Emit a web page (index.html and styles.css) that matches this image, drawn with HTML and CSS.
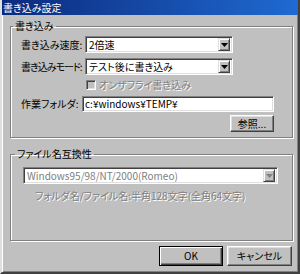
FILE: index.html
```html
<!DOCTYPE html>
<html lang="ja">
<head>
    <meta charset="UTF-8">
    <title>書き込み設定</title>
    <link rel="stylesheet" href="styles.css">
</head>
<body>
    <div class="window">
        <div class="titlebar">書き込み設定</div>
        <div class="content">
            <fieldset class="group group-write">
                <legend>書き込み</legend>
                <div class="row">
                    <span class="label">書き込み速度:</span>
                    <div class="combo">
                        <span class="combo-value">2倍速</span>
                        <span class="combo-btn"><svg width="7" height="4" viewBox="0 0 7 4"><path d="M0 0h7L3.5 4z" fill="#000"/></svg></span>
                    </div>
                </div>
                <div class="row row-mode">
                    <span class="label label-tight">書き込みモード:</span>
                    <div class="combo">
                        <span class="combo-value">テスト後に書き込み</span>
                        <span class="combo-btn"><svg width="7" height="4" viewBox="0 0 7 4"><path d="M0 0h7L3.5 4z" fill="#000"/></svg></span>
                    </div>
                </div>
                <div class="row row-check">
                    <span class="checkbox"></span>
                    <span class="disabled">オンザフライ書き込み</span>
                </div>
                <div class="row row-folder">
                    <span class="label label-folder">作業フォルダ:</span>
                    <div class="textbox">c:¥windows¥TEMP¥</div>
                </div>
                <div class="row row-browse">
                    <button class="btn btn-browse">参照...</button>
                </div>
            </fieldset>

            <fieldset class="group group-compat">
                <legend>ファイル名互換性</legend>
                <div class="combo combo-disabled">
                    <span class="combo-value">Windows95/98/NT/2000(Romeo)</span>
                    <span class="combo-btn"><svg width="7" height="4" viewBox="0 0 7 4"><path d="M0 0h7L3.5 4z" fill="#808080"/></svg></span>
                </div>
                <p class="note disabled">フォルダ名/ファイル名:半角128文字(全角64文字)</p>
            </fieldset>

            <div class="buttons">
                <button class="btn btn-default">OK</button>
                <button class="btn btn-cancel">キャンセル</button>
            </div>
        </div>
    </div>
</body>
</html>
```

FILE: styles.css
```css
body {
    margin: 0;
    background-color: #c0c0c0;
    font-family: "Noto Sans CJK JP", "Liberation Sans", sans-serif;
    font-size: 10px;
    line-height: 12px;
    font-feature-settings: "palt";
    color: #000;
}

.window {
    width: 300px;
    height: 274px;
    box-sizing: border-box;
    border-style: solid;
    border-width: 0 2px 2px 2px;
    border-color: #c0c0c0 #404040 #404040 #dfdfdf;
    box-shadow: inset 1px 0 #fff, inset -1px -1px #808080;
    background-color: #c0c0c0;
}

.titlebar {
    height: 15px;
    line-height: 15px;
    padding-left: 1px;
    background: linear-gradient(90deg, #0c2a7c, #1f6ad2);
    color: #fff;
    font-size: 10px;
}

.content {
    padding: 5px 6px 0 8px;
}

.group {
    margin: 0;
    min-width: 0;
    border: 1px solid #808080;
    box-shadow: inset 1px 1px #fff, 1px 1px #fff;
}

.group legend {
    padding: 0 2px;
    margin-left: -8px;
    line-height: 12px;
}

.group-write {
    width: 283px;
    box-sizing: border-box;
    padding: 4px 18px 5px 10px;
}

.group-compat {
    width: 283px;
    box-sizing: border-box;
    margin-top: 10px;
    padding: 7px 14px 38px 12px;
}

.row {
    display: flex;
    align-items: center;
}

.row-mode {
    margin-top: 5px;
}

.row-check {
    margin-top: 4px;
    padding-left: 65px;
    height: 12px;
}

.row-folder {
    margin-top: 5px;
}

.row-browse {
    margin-top: 3px;
    justify-content: flex-end;
}

.label {
    width: 64px;
    flex: none;
    white-space: nowrap;
}

.label-tight {
    letter-spacing: -1px;
}

.label-folder {
    width: 61px;
}

.combo {
    width: 148px;
    height: 17px;
    box-sizing: border-box;
    display: flex;
    align-items: center;
    justify-content: space-between;
    background-color: #fff;
    border: 1px solid;
    border-color: #808080 #fff #fff #808080;
    box-shadow: inset 1px 1px #404040, inset -1px -1px #dfdfdf;
    padding: 0 2px 0 3px;
}

.combo-value {
    white-space: nowrap;
}

.combo-btn {
    width: 12px;
    height: 13px;
    box-sizing: border-box;
    display: flex;
    align-items: center;
    justify-content: center;
    background-color: #c0c0c0;
    border: 1px solid;
    border-color: #dfdfdf #404040 #404040 #dfdfdf;
    box-shadow: inset 1px 1px #fff, inset -1px -1px #808080;
}

.combo-disabled {
    width: 255px;
}

.combo-disabled .combo-value {
    color: #808080;
}

.checkbox {
    width: 10px;
    height: 10px;
    box-sizing: border-box;
    margin-right: 3px;
    background-color: #c0c0c0;
    border: 1px solid;
    border-color: #808080 #fff #fff #808080;
    box-shadow: inset 1px 1px #404040, inset -1px -1px #dfdfdf;
}

.disabled {
    color: #808080;
    text-shadow: 1px 1px 0 #fff;
}

.textbox {
    width: 192px;
    height: 16px;
    box-sizing: border-box;
    background-color: #fff;
    border: 1px solid;
    border-color: #808080 #fff #fff #808080;
    box-shadow: inset 1px 1px #404040, inset -1px -1px #dfdfdf;
    padding: 1px 2px;
    line-height: 12px;
    white-space: nowrap;
}

.note {
    margin: 6px 0 0 12px;
}

.btn {
    font: inherit;
    color: #000;
    background-color: #c0c0c0;
    border: 1px solid;
    border-color: #fff #404040 #404040 #fff;
    box-shadow: inset -1px -1px #808080, inset 1px 1px #dfdfdf;
    padding: 0;
    height: 17px;
}

.btn-browse {
    width: 44px;
}

.buttons {
    display: flex;
    justify-content: flex-end;
    gap: 4px;
    margin-top: 5px;
}

.btn-default {
    width: 64px;
    height: 20px;
    border: 1px solid #000;
    box-shadow: inset 1px 1px #fff, inset -1px -1px #404040, inset -2px -2px #808080;
}

.btn-cancel {
    width: 65px;
    height: 20px;
}
```
